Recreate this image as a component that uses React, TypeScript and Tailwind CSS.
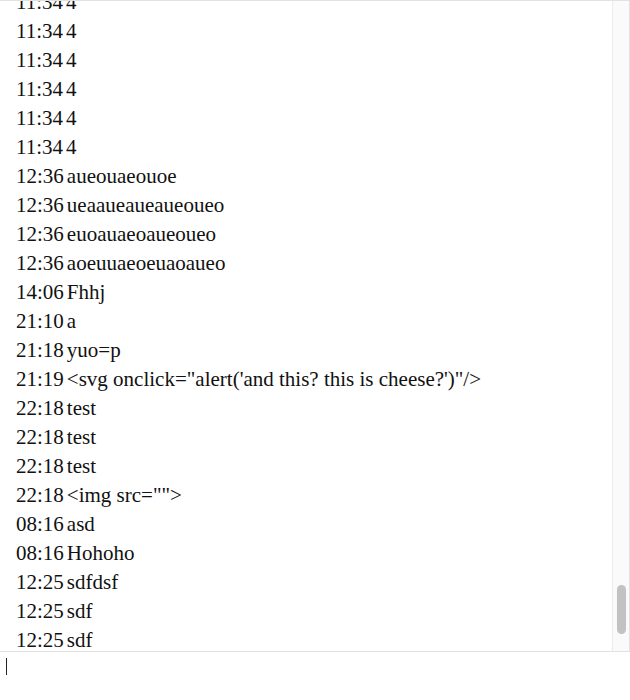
import React from "react";

const rows: [string, string][] = [
  ["11:34", "4"],
  ["11:34", "4"],
  ["11:34", "4"],
  ["11:34", "4"],
  ["11:34", "4"],
  ["11:34", "4"],
  ["12:36", "aueouaeouoe"],
  ["12:36", "ueaaueaueaueoueo"],
  ["12:36", "euoauaeoaueoueo"],
  ["12:36", "aoeuuaeoeuaoaueo"],
  ["14:06", "Fhhj"],
  ["21:10", "a"],
  ["21:18", "yuo=p"],
  ["21:19", "<svg onclick=\"alert('and this? this is cheese?')\"/>"],
  ["22:18", "test"],
  ["22:18", "test"],
  ["22:18", "test"],
  ["22:18", "<img src=\"\">"],
  ["08:16", "asd"],
  ["08:16", "Hohoho"],
  ["12:25", "sdfdsf"],
  ["12:25", "sdf"],
  ["12:25", "sdf"],
];

export default function App() {
  return (
    <div
      className="w-[630px] h-[700px] bg-white flex flex-col text-[#111]"
      style={{ fontFamily: '"Liberation Serif", "Times New Roman", serif' }}
    >
      <div className="h-[651px] flex border-t border-r border-[#e2e2e2]">
        <div className="flex-1 overflow-hidden flex flex-col justify-end pl-[16px]">
          <div className="flex flex-col mb-[-4px]">
            {rows.map(([t, m], i) => (
              <div key={i} className="h-[29px] leading-[29px] text-[21px] whitespace-pre shrink-0">
                <span>{t}</span>
                <span className="ml-[3px]">{m}</span>
              </div>
            ))}
          </div>
        </div>
        <div className="w-[17px] border-l border-[#ececec] bg-[#fafafa] flex flex-col justify-end items-center pb-[17px]">
          <div className="w-[9px] h-[49px] rounded-full bg-[#c2c2c2]" />
        </div>
      </div>
      <div className="flex-1 border-t border-[#e2e2e2] pl-[6px] pt-[6px]">
        <div className="w-[1px] h-[17px] bg-[#222]" />
      </div>
    </div>
  );
}
